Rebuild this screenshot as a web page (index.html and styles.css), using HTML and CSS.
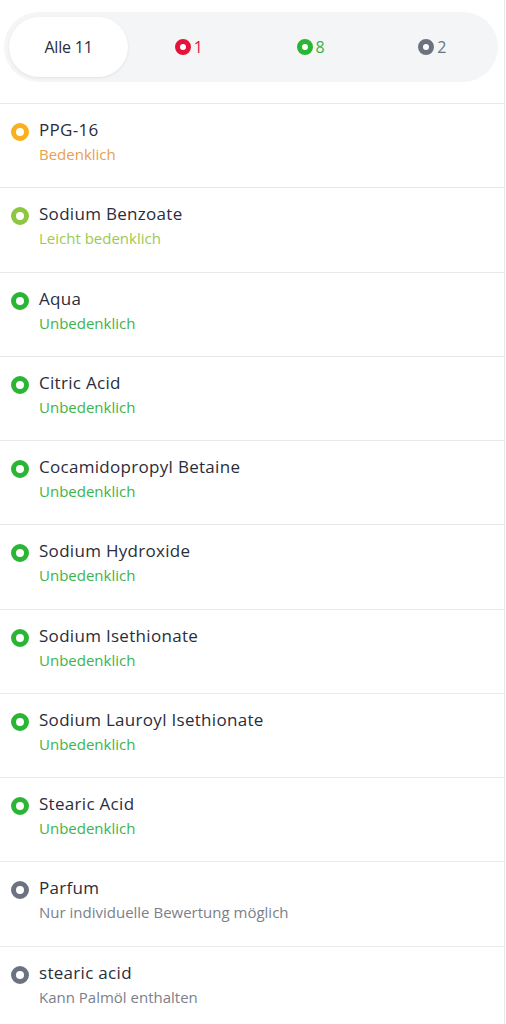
FILE: index.html
```html
<!DOCTYPE html>
<html lang="de">
<head>
    <meta charset="UTF-8">
    <meta name="viewport" content="width=device-width, initial-scale=1.0">
    <title>Inhaltsstoffe</title>
    <link rel="stylesheet" href="styles.css">
</head>
<body>
    <div class="page">
        <div class="tabs">
            <div class="tab active">Alle 11</div>
            <div class="tab tab-red"><span class="dot dot-red"></span>1</div>
            <div class="tab tab-green"><span class="dot dot-green"></span>8</div>
            <div class="tab tab-gray"><span class="dot dot-gray"></span>2</div>
        </div>

        <ul class="list">
            <li class="item">
                <span class="dot dot-orange"></span>
                <div class="info">
                    <div class="name">PPG-16</div>
                    <div class="rating rating-orange">Bedenklich</div>
                </div>
            </li>
            <li class="item">
                <span class="dot dot-lime"></span>
                <div class="info">
                    <div class="name">Sodium Benzoate</div>
                    <div class="rating rating-lime">Leicht bedenklich</div>
                </div>
            </li>
            <li class="item">
                <span class="dot dot-green"></span>
                <div class="info">
                    <div class="name">Aqua</div>
                    <div class="rating rating-green">Unbedenklich</div>
                </div>
            </li>
            <li class="item">
                <span class="dot dot-green"></span>
                <div class="info">
                    <div class="name">Citric Acid</div>
                    <div class="rating rating-green">Unbedenklich</div>
                </div>
            </li>
            <li class="item">
                <span class="dot dot-green"></span>
                <div class="info">
                    <div class="name">Cocamidopropyl Betaine</div>
                    <div class="rating rating-green">Unbedenklich</div>
                </div>
            </li>
            <li class="item">
                <span class="dot dot-green"></span>
                <div class="info">
                    <div class="name">Sodium Hydroxide</div>
                    <div class="rating rating-green">Unbedenklich</div>
                </div>
            </li>
            <li class="item">
                <span class="dot dot-green"></span>
                <div class="info">
                    <div class="name">Sodium Isethionate</div>
                    <div class="rating rating-green">Unbedenklich</div>
                </div>
            </li>
            <li class="item">
                <span class="dot dot-green"></span>
                <div class="info">
                    <div class="name">Sodium Lauroyl Isethionate</div>
                    <div class="rating rating-green">Unbedenklich</div>
                </div>
            </li>
            <li class="item">
                <span class="dot dot-green"></span>
                <div class="info">
                    <div class="name">Stearic Acid</div>
                    <div class="rating rating-green">Unbedenklich</div>
                </div>
            </li>
            <li class="item">
                <span class="dot dot-gray"></span>
                <div class="info">
                    <div class="name">Parfum</div>
                    <div class="rating rating-gray">Nur individuelle Bewertung möglich</div>
                </div>
            </li>
            <li class="item">
                <span class="dot dot-gray"></span>
                <div class="info">
                    <div class="name">stearic acid</div>
                    <div class="rating rating-gray">Kann Palmöl enthalten</div>
                </div>
            </li>
        </ul>
    </div>
</body>
</html>
```

FILE: styles.css
```css
body {
    margin: 0;
    font-family: "Open Sans", Arial, sans-serif;
    background: #fff;
    color: #2a2d3b;
}
.page {
    width: 505px;
    min-height: 1024px;
    padding-top: 12px;
    box-sizing: border-box;
    border-right: 1px solid #e6e7ea;
}
.tabs {
    display: flex;
    align-items: center;
    margin: 0 6px 0 4px;
    height: 70px;
    padding: 0 5px;
    background: #f4f5f7;
    border-radius: 35px;
}
.tab {
    flex: 1;
    display: flex;
    align-items: center;
    justify-content: center;
    height: 60px;
    font-size: 16px;
    letter-spacing: -0.2px;
}
.active {
    flex: 0 0 119px;
    background: #fff;
    border-radius: 30px;
    box-shadow: 0 1px 3px rgba(0,0,0,0.08);
    color: #2a2d3b;
}
.tab .dot {
    width: 16px;
    height: 16px;
    border-width: 5px;
    margin-right: 3px;
}
.tab-red { color: #e5133a; }
.tab-green { color: #37b33f; }
.tab-gray { color: #6c7380; }
.list {
    list-style: none;
    margin: 21px 0 0 0;
    padding: 0;
    border-top: 1px solid #e8e9ec;
}
.item {
    display: flex;
    align-items: flex-start;
    height: 83.25px;
    padding: 0 0 0 11px;
    border-bottom: 1px solid #e8e9ec;
}
.dot {
    display: inline-block;
    box-sizing: border-box;
    width: 18px;
    height: 18px;
    border-radius: 50%;
    border: 5.5px solid;
    background: #fff;
    flex-shrink: 0;
}
.item .dot { margin-top: 19px; }
.dot-orange { border-color: #fbb01b; }
.dot-lime { border-color: #8dc63f; }
.dot-green { border-color: #2ab534; }
.dot-red { border-color: #e5133a; }
.dot-gray { border-color: #6c7380; }
.info {
    margin-left: 10px;
    padding-top: 14px;
}
.name {
    font-size: 17px;
    letter-spacing: 0.3px;
    line-height: 24px;
    color: #2a2d3b;
}
.rating {
    font-size: 15px;
    line-height: 20px;
    margin-top: 2px;
}
.rating-orange { color: #e9a04d; }
.rating-lime { color: #9dc94f; }
.rating-green { color: #3bb54a; }
.rating-gray { color: #7b808b; }
```
